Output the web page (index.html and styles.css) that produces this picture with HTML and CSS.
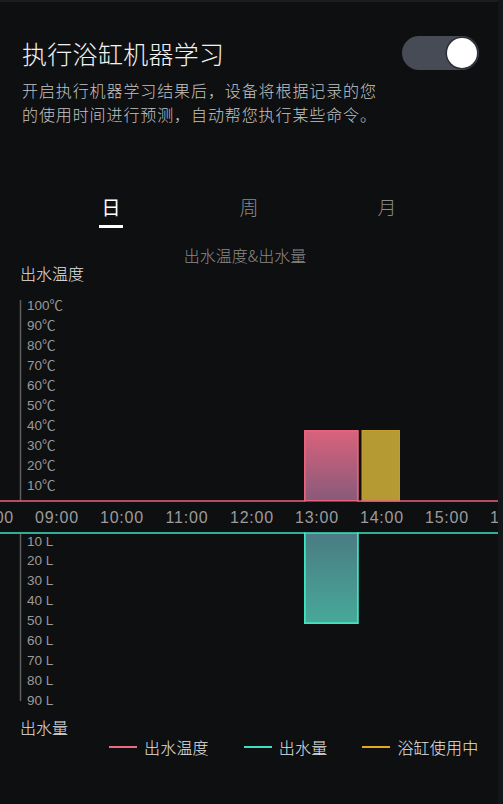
FILE: index.html
```html
<!DOCTYPE html>
<html lang="zh-CN">
<head>
<meta charset="utf-8">
<title>执行浴缸机器学习</title>
<link rel="stylesheet" href="styles.css">
</head>
<body>
<div class="screen">
  <div class="topline"></div>
  <header class="head">
    <h1 class="title">执行浴缸机器学习</h1>
    <div class="switch"><span class="knob"></span></div>
  </header>
  <p class="desc">开启执行机器学习结果后，设备将根据记录的您<br>的使用时间进行预测，自动帮您执行某些命令。</p>

  <nav class="tabs">
    <div class="tab active">日</div>
    <div class="tab">周</div>
    <div class="tab">月</div>
  </nav>

  <div class="subtitle">出水温度&amp;出水量</div>
  <div class="axis-title top">出水温度</div>

  <svg class="chart" width="503" height="435" viewBox="0 0 503 435">
    <defs>
      <linearGradient id="gPink" x1="0" y1="0" x2="0" y2="1">
        <stop offset="0" stop-color="#d9627c"/>
        <stop offset="1" stop-color="#885a7a"/>
      </linearGradient>
      <linearGradient id="gTeal" x1="0" y1="0" x2="0" y2="1">
        <stop offset="0" stop-color="#4a7b84"/>
        <stop offset="1" stop-color="#47a998"/>
      </linearGradient>
    </defs>

    <!-- temperature axis -->
    <line class="axis" x1="20.5" y1="16" x2="20.5" y2="217"/>
    <g class="tick">
      <text x="27" y="21">100℃</text>
      <text x="27" y="41.1">90℃</text>
      <text x="27" y="61.2">80℃</text>
      <text x="27" y="81.3">70℃</text>
      <text x="27" y="101.4">60℃</text>
      <text x="27" y="121.5">50℃</text>
      <text x="27" y="141.6">40℃</text>
      <text x="27" y="161.7">30℃</text>
      <text x="27" y="181.8">20℃</text>
      <text x="27" y="201.9">10℃</text>
    </g>

    <!-- temperature series -->
    <rect x="304.75" y="146.75" width="53" height="70" fill="url(#gPink)" stroke="#e8647e" stroke-width="1.5"/>
    <rect x="362" y="146.5" width="37.5" height="70.5" fill="#b59a33" stroke="#c59f2c" stroke-width="1"/>
    <path class="line-pink" d="M0 217 H304.75 V146.75 H357.75 V217 H503"/>

    <!-- time axis -->
    <g class="time">
      <text x="-8" y="233">08:00</text>
      <text x="57" y="233">09:00</text>
      <text x="122" y="233">10:00</text>
      <text x="187" y="233">11:00</text>
      <text x="252" y="233">12:00</text>
      <text x="317" y="233">13:00</text>
      <text x="382" y="233">14:00</text>
      <text x="447" y="233">15:00</text>
      <text x="512" y="233">16:00</text>
    </g>

    <!-- volume series -->
    <rect x="304.75" y="249" width="53" height="90.25" fill="url(#gTeal)" stroke="#3ee3c2" stroke-width="1.5"/>
    <path class="line-teal" d="M0 249 H304.75 V339.25 H357.75 V249 H503"/>

    <!-- volume axis -->
    <line class="axis" x1="20.5" y1="250" x2="20.5" y2="417"/>
    <g class="tick">
      <text x="27" y="257">10 L</text>
      <text x="27" y="276.9">20 L</text>
      <text x="27" y="296.8">30 L</text>
      <text x="27" y="316.7">40 L</text>
      <text x="27" y="336.6">50 L</text>
      <text x="27" y="356.5">60 L</text>
      <text x="27" y="376.4">70 L</text>
      <text x="27" y="396.3">80 L</text>
      <text x="27" y="416.2">90 L</text>
    </g>
  </svg>

  <div class="axis-title bottom">出水量</div>

  <div class="legend">
    <div class="legend-item"><span class="swatch pink"></span>出水温度</div>
    <div class="legend-item"><span class="swatch teal"></span>出水量</div>
    <div class="legend-item"><span class="swatch yellow"></span>浴缸使用中</div>
  </div>
</div>
</body>
</html>
```

FILE: styles.css
```css
* { box-sizing: border-box; }

html, body {
  margin: 0;
  padding: 0;
  background: #0e0f11;
}

body {
  font-family: "Noto Sans CJK SC", "Liberation Sans", sans-serif;
  color: #e6e6e6;
}

.screen {
  width: 503px;
  height: 804px;
  overflow: hidden;
  background: #0e0f11;
  border-right: 5px solid #141519;
}

.topline {
  height: 2px;
  background: #1b1d23;
}

.head {
  display: flex;
  align-items: center;
  justify-content: space-between;
  height: 34px;
  margin-top: 34px;
  padding: 0 19px 0 22px;
}

.title {
  margin: 0;
  font-size: 25px;
  font-weight: 300;
  line-height: 34px;
  letter-spacing: 0.3px;
  color: #f2f2f2;
}

.switch {
  position: relative;
  width: 77px;
  height: 34px;
  border-radius: 17px;
  background: #474b56;
}

.knob {
  position: absolute;
  top: 2px;
  right: 2px;
  width: 30px;
  height: 30px;
  border-radius: 50%;
  background: #ffffff;
  box-shadow: 0 0 0 1.5px #2b2e36;
}

.desc {
  margin: 8px 0 0;
  padding-left: 22px;
  font-size: 16px;
  font-weight: 300;
  line-height: 24px;
  letter-spacing: 0.9px;
  color: #c4c4c4;
}

.tabs {
  display: grid;
  grid-template-columns: repeat(3, 138px);
  margin: 68px 0 0 42px;
}

.tab {
  display: flex;
  flex-direction: column;
  align-items: center;
  font-size: 19px;
  font-weight: 300;
  line-height: 26px;
  color: #8a8a8a;
}

.tab::after {
  content: "";
  display: block;
  width: 24px;
  height: 3px;
  margin-top: 5px;
  background: transparent;
}

.tab.active {
  color: #ffffff;
  font-weight: 400;
}

.tab.active::after {
  background: #ffffff;
}

.subtitle {
  margin-top: 18px;
  padding-right: 8px;
  text-align: center;
  font-size: 16px;
  font-weight: 300;
  line-height: 18px;
  color: #8a8a8a;
}

.axis-title {
  padding-left: 20px;
  font-size: 16px;
  font-weight: 300;
  line-height: 18px;
  color: #e4e4e4;
}

.axis-title.top {
  margin-top: 0;
  margin-bottom: 2px;
}

.axis-title.bottom {
  margin-top: -1px;
}

.chart {
  display: block;
}

.axis {
  stroke: #5e5e5e;
  stroke-width: 1.5;
}

.tick text {
  font-family: "Liberation Sans", "Noto Sans CJK SC", sans-serif;
  font-size: 13.5px;
  fill: #9a9a9a;
  dominant-baseline: central;
}

.time text {
  font-family: "Liberation Sans", sans-serif;
  font-size: 16px;
  letter-spacing: 0.8px;
  fill: #9c9c9c;
  text-anchor: middle;
  dominant-baseline: central;
}

.line-pink {
  fill: none;
  stroke: #e8627c;
  stroke-width: 1.5;
}

.line-teal {
  fill: none;
  stroke: #3ee3c2;
  stroke-width: 1.5;
}

.legend {
  display: flex;
  gap: 35px;
  margin-top: 1px;
  margin-left: 109px;
  font-size: 16px;
  font-weight: 300;
  line-height: 20px;
  letter-spacing: 0.2px;
  color: #e4e4e4;
}

.legend-item {
  display: flex;
  align-items: center;
  gap: 7px;
}

.swatch {
  display: block;
  width: 28px;
  height: 2px;
}

.swatch.pink { background: #ec6b84; }
.swatch.teal { background: #3fe0c2; }
.swatch.yellow { background: #e6a91c; }
```
